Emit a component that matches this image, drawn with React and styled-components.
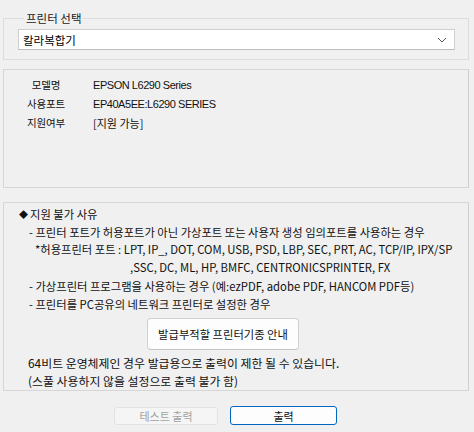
import React from "react";
import styled, { createGlobalStyle } from "styled-components";

const Global = createGlobalStyle`
  html, body { margin: 0; padding: 0; background: #f0f0f0; }
  body { font-family: "Noto Sans CJK KR", "Noto Sans", sans-serif; color: #000; }
`;

const Window = styled.div`
  width: 474px;
  height: 432px;
  box-sizing: border-box;
  padding: 11px 5px 0 3px;
  display: flex;
  flex-direction: column;
  background: #f0f0f0;
`;

const GroupBox = styled.fieldset`
  margin: 0;
  border: 1px solid #dcdcdc;
  border-radius: 0;
  padding: 4px 13px 9px 14px;
  min-width: 0;
`;

const Legend = styled.legend`
  padding: 0 2px;
  margin-left: 6px;
  font-size: 11.5px;
  line-height: 14px;
  color: #1a1a1a;
`;

const Combo = styled.div`
  height: 21px;
  box-sizing: border-box;
  background: #fff;
  border: 1px solid #cfcfcf;
  border-bottom-color: #bdbdbd;
  display: flex;
  align-items: center;
  justify-content: space-between;
  padding: 0 7px 0 4px;
  font-size: 11.5px;
`;

const InfoPanel = styled.div`
  margin-top: 9px;
  height: 119px;
  box-sizing: border-box;
  border: 1px solid #d6d6d6;
  border-right-color: #cfcfcf;
  padding-top: 5px;
  display: flex;
  flex-direction: column;
`;

const InfoRow = styled.div`
  display: flex;
  align-items: center;
  height: 19px;
`;

const InfoLabel = styled.div`
  width: 84px;
  text-align: center;
  font-size: 10.5px;
  letter-spacing: -0.2px;
  color: #111;
`;

const InfoValue = styled.div`
  margin-left: 5px;
  font-family: "Liberation Sans", Arial, sans-serif;
  font-size: 11px;
  letter-spacing: -0.45px;
  color: #111;
`;

const KoValue = styled(InfoValue)`
  font-family: "Noto Sans CJK KR", sans-serif;
  font-size: 11px;
  letter-spacing: 0;
`;

const NoticePanel = styled.div`
  margin-top: 14px;
  height: 189px;
  box-sizing: border-box;
  border: 1px solid #d6d6d6;
  border-right-color: #cfcfcf;
  padding: 3px 0 0 0;
  display: flex;
  flex-direction: column;
`;

const Line = styled.div`
  font-size: ${(p) => p.$size || 11.3}px;
  line-height: 17.5px;
  height: 17.5px;
  white-space: nowrap;
  color: #111;
  padding-left: ${(p) => p.$indent}px;
  margin-top: ${(p) => p.$gap || 0}px;
`;

const Diamond = styled.span`
  font-size: 9px;
  margin-right: 2px;
  position: relative;
  top: -1px;
`;

const GuideRow = styled.div`
  display: flex;
  padding-left: 143px;
  margin: 5px 0 4px;
`;

const GuideButton = styled.button`
  width: 152px;
  height: 32px;
  box-sizing: border-box;
  background: #fdfdfd;
  border: 1px solid #d0d0d0;
  border-bottom-color: #c4c4c4;
  border-radius: 4px;
  font-family: "Noto Sans CJK KR", sans-serif;
  font-size: 11.3px;
  color: #111;
  padding: 0;
`;

const ButtonBar = styled.div`
  display: flex;
  gap: 12px;
  padding-left: 111px;
  margin-top: 15px;
`;

const DialogButton = styled.button`
  width: ${(p) => p.$w}px;
  height: ${(p) => (p.$primary ? 19 : 18)}px;
  box-sizing: border-box;
  border-radius: 3px;
  padding: 0;
  font-family: "Noto Sans CJK KR", sans-serif;
  font-size: 11px;
  background: ${(p) => (p.$primary ? "#fdfdfd" : "#f5f5f5")};
  border: 1px solid ${(p) => (p.$primary ? "#0067c0" : "#e2e2e2")};
  color: ${(p) => (p.$primary ? "#111" : "#a2a2a2")};
  margin-top: ${(p) => (p.$primary ? 0 : 1)}px;
`;

const Chevron = () => (
  <svg width="10" height="6" viewBox="0 0 10 6">
    <path d="M1 1 L5 5 L9 1" fill="none" stroke="#555" strokeWidth="1" />
  </svg>
);

export default function App() {
  return (
    <>
      <Global />
      <Window>
        <GroupBox>
          <Legend>프린터 선택</Legend>
          <Combo>
            <span>칼라복합기</span>
            <Chevron />
          </Combo>
        </GroupBox>

        <InfoPanel>
          <InfoRow>
            <InfoLabel>모델명</InfoLabel>
            <InfoValue>EPSON L6290 Series</InfoValue>
          </InfoRow>
          <InfoRow>
            <InfoLabel>사용포트</InfoLabel>
            <InfoValue>EP40A5EE:L6290 SERIES</InfoValue>
          </InfoRow>
          <InfoRow>
            <InfoLabel>지원여부</InfoLabel>
            <KoValue>[지원 가능]</KoValue>
          </InfoRow>
        </InfoPanel>

        <NoticePanel>
          <Line $indent={15}>
            <Diamond>◆</Diamond>지원 불가 사유
          </Line>
          <Line $indent={25}>- 프린터 포트가 허용포트가 아닌 가상포트 또는 사용자 생성 임의포트를 사용하는 경우</Line>
          <Line $indent={31}>*허용프린터 포트 : LPT, IP_, DOT, COM, USB, PSD, LBP, SEC, PRT, AC, TCP/IP, IPX/SP</Line>
          <Line $indent={126}>,SSC, DC, ML, HP, BMFC, CENTRONICSPRINTER, FX</Line>
          <Line $indent={25} $gap={2}>- 가상프린터 프로그램을 사용하는 경우 (예:ezPDF, adobe PDF, HANCOM PDF등)</Line>
          <Line $indent={25}>- 프린터를 PC공유의 네트워크 프린터로 설정한 경우</Line>
          <GuideRow>
            <GuideButton>발급부적할 프린터기종 안내</GuideButton>
          </GuideRow>
          <Line $indent={24} $size={11.9}>64비트 운영체제인 경우 발급용으로 출력이 제한 될 수 있습니다.</Line>
          <Line $indent={24} $size={11.9}>(스풀 사용하지 않을 설정으로 출력 불가 함)</Line>
        </NoticePanel>

        <ButtonBar>
          <DialogButton $w={104} disabled>테스트 출력</DialogButton>
          <DialogButton $w={107} $primary>출력</DialogButton>
        </ButtonBar>
      </Window>
    </>
  );
}
